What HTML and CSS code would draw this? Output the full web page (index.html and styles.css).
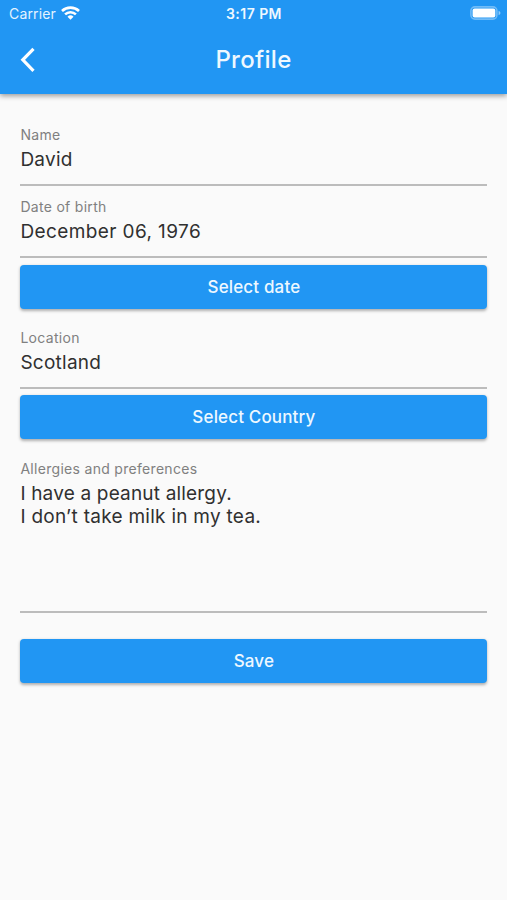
FILE: index.html
```html
<!DOCTYPE html>
<html lang="en">
<head>
<meta charset="utf-8">
<title>Profile</title>
<link rel="stylesheet" href="styles.css">
</head>
<body>
<header class="appbar">
  <div class="status">
    <div class="carrier"><span class="carrier-name">Carrier</span>
      <svg class="wifi" width="19" height="14" viewBox="0 0 19 14" fill="none" stroke="#fff" stroke-width="2.600"><path d="M1 5a12.300 12.300 0 0 1 17 0M4.100 8.400a7.800 7.800 0 0 1 10.800 0"/><path d="M9.500 13.800 6.500 10.800a4.300 4.300 0 0 1 6 0z" fill="#fff" stroke="none"/></svg>
    </div>
    <span class="clock">3:17 PM</span>
    <svg class="battery" width="31" height="14" viewBox="0 0 31 14"><rect x=".9" y=".9" width="26" height="12.200" rx="4" fill="none" stroke="#fff" stroke-width="1.600" stroke-opacity=".36"/><rect x="2.600" y="2.600" width="22.700" height="9" rx="2" fill="#fff"/><path d="M28.600 4.800v4.400q1.900-.7 1.900-2.200t-1.900-2.200" fill="#fff" fill-opacity=".5"/></svg>
  </div>
  <div class="toolbar">
    <svg class="back" width="16" height="26" viewBox="0 0 16 26" fill="none" stroke="#fff" stroke-width="3.200"><path d="M13.500 1.800 2.800 12.800l10.700 11"/></svg>
    <h1 class="title">Profile</h1>
  </div>
</header>
<main class="form">
  <section class="field"><label class="label">Name</label><div class="value">David</div></section>
  <section class="field"><label class="label">Date of birth</label><div class="value date">December 06, 1976</div></section>
  <button class="button">Select date</button>
  <section class="field spaced"><label class="label">Location</label><div class="value">Scotland</div></section>
  <button class="button">Select Country</button>
  <section class="field notes spaced"><label class="label">Allergies and preferences</label><div class="value"><span class="line">I have a peanut allergy.</span><span class="line second">I don’t take milk in my tea.</span></div></section>
  <button class="button save">Save</button>
</main>
</body>
</html>
```

FILE: styles.css
```css
* { box-sizing: border-box; }
body { margin: 0; min-height: 900px; background: #fafafa; font-family: Inter, sans-serif; color: #303030; }
.appbar { height: 94px; background: #2196f3; color: #fff; box-shadow: 0 2px 5px rgba(0,0,0,.38); }
.status { height: 27px; padding: 0 6px 0 9px; display: grid; grid-template-columns: 1fr auto 1fr; align-items: center; font-size: 14px; }
.carrier { display: flex; align-items: center; gap: 5px; color: #e4f3ff; }
.carrier-name { letter-spacing: .15px; }
.wifi { margin-top: -1px; }
.clock { margin-right: 2px; font-weight: 600; letter-spacing: .45px; color: #eef8ff; }
.battery { justify-self: end; margin-top: -1px; }
.toolbar { height: 65px; padding: 0 20px; display: grid; grid-template-columns: 1fr auto 1fr; align-items: center; }
.title { margin: 0; font-size: 24px; font-weight: 500; letter-spacing: .3px; color: #eef8ff; }
.form { padding: 30px 19.6px 0 20.4px; display: flex; flex-direction: column; }
.field { height: 62px; padding-top: 2px; border-bottom: 2px solid #bcbcbc; }
.field + .field { margin-top: 10px; }
.label { display: block; font-size: 14px; line-height: 18px; color: #808080; letter-spacing: .3px; }
.value { margin-top: 4px; font-size: 19px; line-height: 23px; letter-spacing: .25px; }
.date { letter-spacing: .4px; }
.line { display: block; letter-spacing: .18px; }
.second { letter-spacing: .27px; }
.button { height: 44px; margin-top: 7px; border: 0; border-radius: 4px; background: #2196f3; color: #eef8ff; font: 500 17px Inter, sans-serif; letter-spacing: .15px; padding: 0; box-shadow: 0 1.500px 3px rgba(0,0,0,.3); }
.field.spaced { margin-top: 18px; }
.spaced + .button:not(.save) { margin: 6.400px 0 .6px; }
.field.notes { height: 155px; }
.button.save { margin-top: 26.400px; }
```
